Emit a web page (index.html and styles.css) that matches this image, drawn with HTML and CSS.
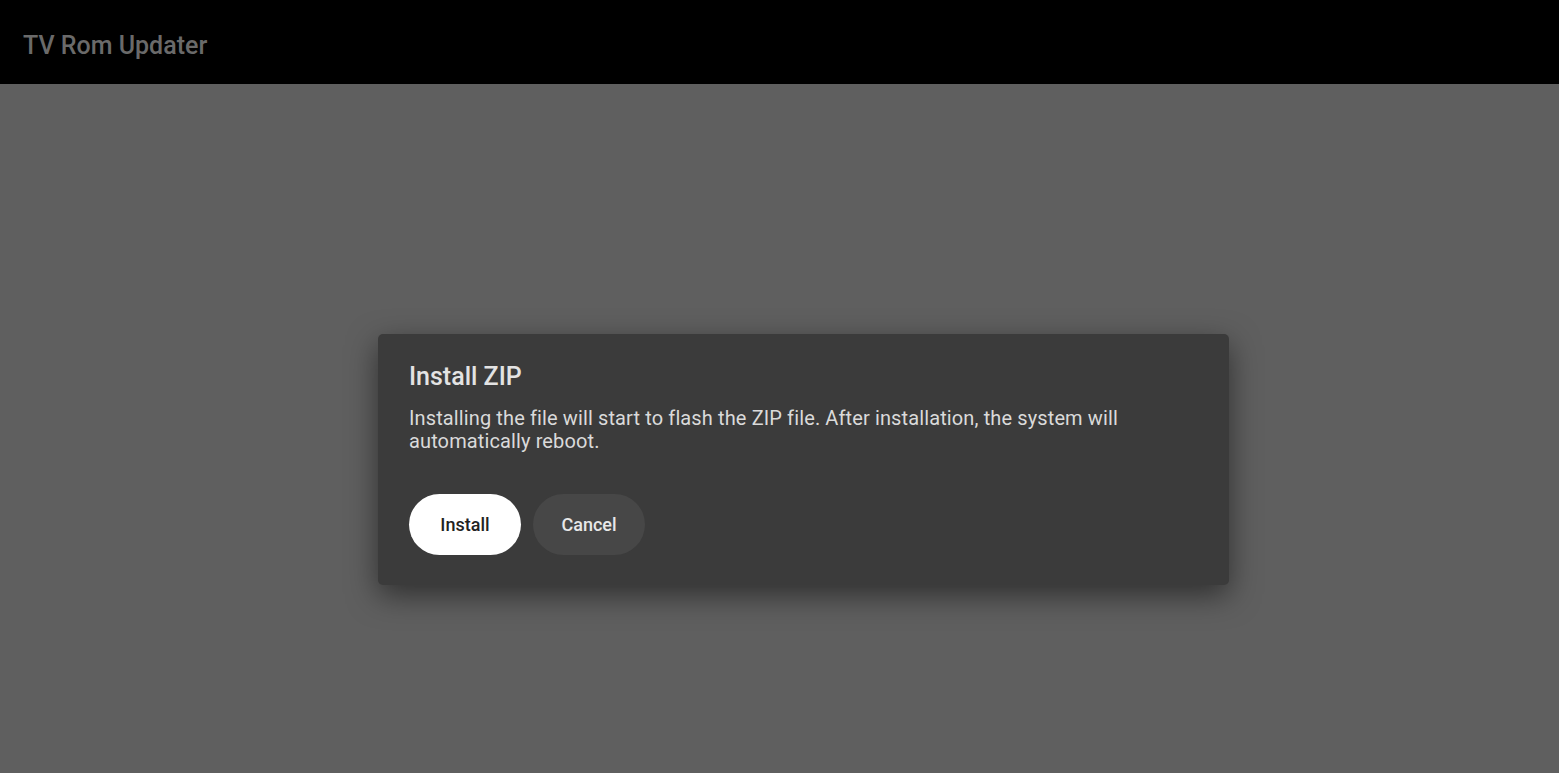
FILE: index.html
```html
<!DOCTYPE html>
<html>
	<head>
		<title>TV Rom Updater</title>
		<link rel="stylesheet" href="styles.css">
	</head>
	<body>
		<div class="topbar">
			<div class="apptitle">TV Rom Updater</div>
		</div>
		<div class="scrim">
			<div class="dialog">
				<div class="dialog-title">Install ZIP</div>
				<div class="dialog-text">Installing the file will start to flash the ZIP file. After installation, the system will automatically reboot.</div>
				<div class="dialog-buttons">
					<button class="btn btn-primary">Install</button>
					<button class="btn btn-secondary">Cancel</button>
				</div>
			</div>
		</div>
	</body>
</html>
```

FILE: styles.css
```css
html, body {
	margin: 0;
	height: 100%;
}

body {
	background-color: #5f5f5f;
	font-family: Roboto, "Liberation Sans", sans-serif;
	display: flex;
	flex-direction: column;
}

.topbar {
	height: 84px;
	background-color: #000;
	display: flex;
	align-items: center;
	padding-left: 23px;
}

.apptitle {
	color: #6a6a6a;
	font-size: 25px;
	font-weight: 500;
	margin-top: 6px;
}

.scrim {
	flex: 1;
	display: flex;
	justify-content: center;
	align-items: flex-start;
	padding-top: 250px;
}

.dialog {
	width: 851px;
	box-sizing: border-box;
	height: 251px;
	background-color: #3b3b3b;
	border-radius: 5px;
	padding: 28px 31px 0;
	box-shadow: 0 10px 30px rgba(0, 0, 0, 0.5);
	margin-left: 48px;
}

.dialog-title {
	color: #e3e3e3;
	font-size: 25px;
	font-weight: 500;
	line-height: 30px;
}

.dialog-text {
	color: #dadada;
	font-size: 20px;
	letter-spacing: 0.12px;
	line-height: 23px;
	margin-top: 15px;
}

.dialog-buttons {
	display: flex;
	gap: 12px;
	margin-top: 41px;
}

.btn {
	width: 112px;
	height: 61px;
	border: none;
	border-radius: 31px;
	font-family: Roboto, "Liberation Sans", sans-serif;
	font-size: 18px;
	font-weight: 500;
	margin: 0;
	padding: 0;
}

.btn-primary {
	background-color: #fff;
	color: #222;
}

.btn-secondary {
	background-color: #474747;
	color: #e8e8e8;
}
```
